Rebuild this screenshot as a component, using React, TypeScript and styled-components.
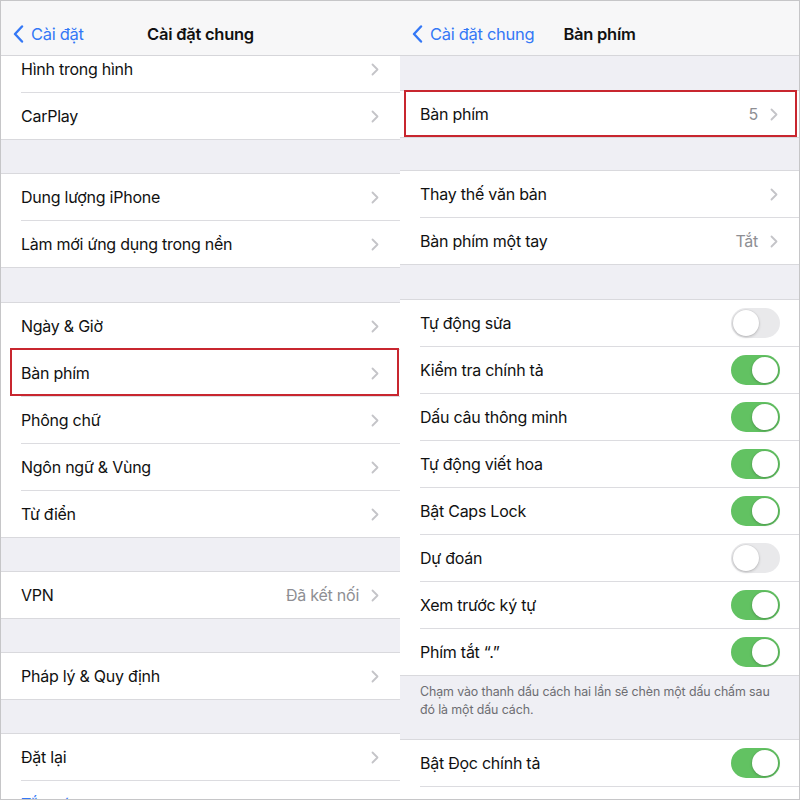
import React from "react";
import styled, { createGlobalStyle } from "styled-components";

const GlobalStyle = createGlobalStyle`
  html, body { margin: 0; padding: 0; background: #fff; }
  body { font-family: Inter, "Noto Sans", "Liberation Sans", sans-serif; -webkit-font-smoothing: antialiased; }
`;

const Frame = styled.div`
  width: 800px;
  height: 800px;
  box-sizing: border-box;
  border: 1px solid #c6c6c8;
  display: grid;
  grid-template-columns: 399px 399px;
  overflow: hidden;
  background: #efeff4;
`;

const Screen = styled.div`
  display: flex;
  flex-direction: column;
  height: 798px;
  overflow: hidden;
  background: #efeff4;
`;

const NavBar = styled.div`
  flex: 0 0 auto;
  height: 55px;
  box-sizing: border-box;
  padding-top: 12px;
  border-bottom: 1px solid #d6d6da;
  background: #f7f7f8;
  display: grid;
  grid-template-columns: 1fr auto 1fr;
  align-items: center;
  z-index: 2;
`;

const Back = styled.div`
  display: flex;
  align-items: center;
  gap: 7px;
  padding-left: 12px;
  color: #3478f6;
  font-size: 16.5px;
  letter-spacing: -0.3px;
`;

const Title = styled.div`
  font-weight: 600;
  font-size: 16.5px;
  letter-spacing: -0.25px;
  color: #111;
`;

const Content = styled.div`
  flex: 1 1 auto;
  overflow: hidden;
`;

const List = styled.div<{ $lift?: number }>`
  margin-top: ${(p) => (p.$lift ? -p.$lift : 0)}px;
`;

const Gap = styled.div<{ $h?: number }>`
  height: ${(p) => p.$h ?? 33}px;
`;

const Group = styled.div`
  background: #fff;
  border-top: 1px solid #d9d9dd;
  border-bottom: 1px solid #d9d9dd;
`;

const Row = styled.div<{ $hl?: "left" | "right" }>`
  position: relative;
  height: 46px;
  display: flex;
  align-items: center;
  padding: 0 19px 0 20px;
  box-sizing: border-box;
  ${(p) =>
    p.$hl
      ? `&::after {
    content: "";
    position: absolute;
    top: ${p.$hl === "left" ? -2 : -1}px;
    bottom: 0px;
    left: ${p.$hl === "left" ? 9 : 4}px;
    right: ${p.$hl === "left" ? 1 : 2}px;
    border: 2px solid #c8262f;
    pointer-events: none;
  }`
      : ""}
`;

const RowSep = styled.div`
  height: 1px;
  margin-left: 20px;
  background: #dcdce0;
`;

const Label = styled.div<{ $blue?: boolean }>`
  flex: 1 1 auto;
  font-size: 16px;
  letter-spacing: -0.25px;
  color: ${(p) => (p.$blue ? "#3478f6" : "#111")};
  white-space: nowrap;
`;

const Value = styled.div`
  font-size: 16px;
  letter-spacing: -0.25px;
  color: #8e8e93;
  margin-right: 11px;
`;

const ChevronWrap = styled.span`
  display: inline-flex;
  width: 9px;
  justify-content: flex-end;
  margin-right: 2px;
`;

const Chevron = () => (
  <ChevronWrap>
    <svg width="8" height="13" viewBox="0 0 8 13">
      <path d="M1.5 1.5 L6.5 6.5 L1.5 11.5" fill="none" stroke="#c4c4c8" strokeWidth="1.8" strokeLinecap="round" strokeLinejoin="round" />
    </svg>
  </ChevronWrap>
);

const BackChevron = () => (
  <svg width="11" height="18" viewBox="0 0 11 18">
    <path d="M9 1.5 L2 9 L9 16.5" fill="none" stroke="#3478f6" strokeWidth="2.4" strokeLinecap="round" strokeLinejoin="round" />
  </svg>
);

const Track = styled.div<{ $on: boolean }>`
  width: 49px;
  height: 30px;
  border-radius: 15px;
  box-sizing: border-box;
  background: ${(p) => (p.$on ? "#62c262" : "#e9e9eb")};
  position: relative;
  flex: 0 0 auto;
`;

const Knob = styled.div<{ $on: boolean }>`
  position: absolute;
  top: 2px;
  left: ${(p) => (p.$on ? 21 : 2)}px;
  width: 26px;
  height: 26px;
  border-radius: 50%;
  background: #fff;
  box-shadow: 0 1px 3px rgba(0, 0, 0, 0.22), 0 0 0 0.5px rgba(0, 0, 0, 0.06);
`;

const Toggle = ({ on }: { on: boolean }) => (
  <Track $on={on}>
    <Knob $on={on} />
  </Track>
);

const Footer = styled.div`
  padding: 7px 22px 0 20px;
  height: 63px;
  box-sizing: border-box;
  font-size: 12.4px;
  letter-spacing: -0.1px;
  line-height: 18px;
  color: #6d6d72;
`;

type Item = { label: string; value?: string; hl?: "left" | "right"; blue?: boolean; toggle?: boolean; on?: boolean; noChevron?: boolean };

const Section = ({ items }: { items: Item[] }) => (
  <Group>
    {items.map((it, i) => (
      <React.Fragment key={it.label}>
        {i > 0 && <RowSep />}
        <Row $hl={it.hl}>
          <Label $blue={it.blue}>{it.label}</Label>
          {it.value && <Value>{it.value}</Value>}
          {it.toggle ? <Toggle on={!!it.on} /> : !it.noChevron && <Chevron />}
        </Row>
      </React.Fragment>
    ))}
  </Group>
);

export default function App() {
  return (
    <>
      <GlobalStyle />
      <Frame>
        <Screen>
          <NavBar>
            <Back>
              <BackChevron />
              Cài đặt
            </Back>
            <Title>Cài đặt chung</Title>
            <div />
          </NavBar>
          <Content>
            <List $lift={11}>
              <Section items={[{ label: "Hình trong hình" }, { label: "CarPlay" }]} />
              <Gap />
              <Section items={[{ label: "Dung lượng iPhone" }, { label: "Làm mới ứng dụng trong nền" }]} />
              <Gap $h={34} />
              <Section
                items={[
                  { label: "Ngày & Giờ" },
                  { label: "Bàn phím", hl: "left" },
                  { label: "Phông chữ" },
                  { label: "Ngôn ngữ & Vùng" },
                  { label: "Từ điển" },
                ]}
              />
              <Gap />
              <Section items={[{ label: "VPN", value: "Đã kết nối" }]} />
              <Gap />
              <Section items={[{ label: "Pháp lý & Quy định" }]} />
              <Gap />
              <Section items={[{ label: "Đặt lại" }, { label: "Tắt máy", blue: true, noChevron: true }]} />
            </List>
          </Content>
        </Screen>
        <Screen>
          <NavBar>
            <Back>
              <BackChevron />
              Cài đặt chung
            </Back>
            <Title>Bàn phím</Title>
            <div />
          </NavBar>
          <Content>
            <List>
              <Gap $h={34} />
              <Section items={[{ label: "Bàn phím", value: "5", hl: "right" }]} />
              <Gap $h={32} />
              <Section items={[{ label: "Thay thế văn bản" }, { label: "Bàn phím một tay", value: "Tắt" }]} />
              <Gap $h={34} />
              <Section
                items={[
                  { label: "Tự động sửa", toggle: true, on: false },
                  { label: "Kiểm tra chính tả", toggle: true, on: true },
                  { label: "Dấu câu thông minh", toggle: true, on: true },
                  { label: "Tự động viết hoa", toggle: true, on: true },
                  { label: "Bật Caps Lock", toggle: true, on: true },
                  { label: "Dự đoán", toggle: true, on: false },
                  { label: "Xem trước ký tự", toggle: true, on: true },
                  { label: "Phím tắt “.”", toggle: true, on: true },
                ]}
              />
              <Footer>
                Chạm vào thanh dấu cách hai lần sẽ chèn một dấu chấm sau đó là một dấu cách.
              </Footer>
              <Section
                items={[
                  { label: "Bật Đọc chính tả", toggle: true, on: true },
                  { label: "Ngôn ngữ đọc chính tả" },
                ]}
              />
            </List>
          </Content>
        </Screen>
      </Frame>
    </>
  );
}
